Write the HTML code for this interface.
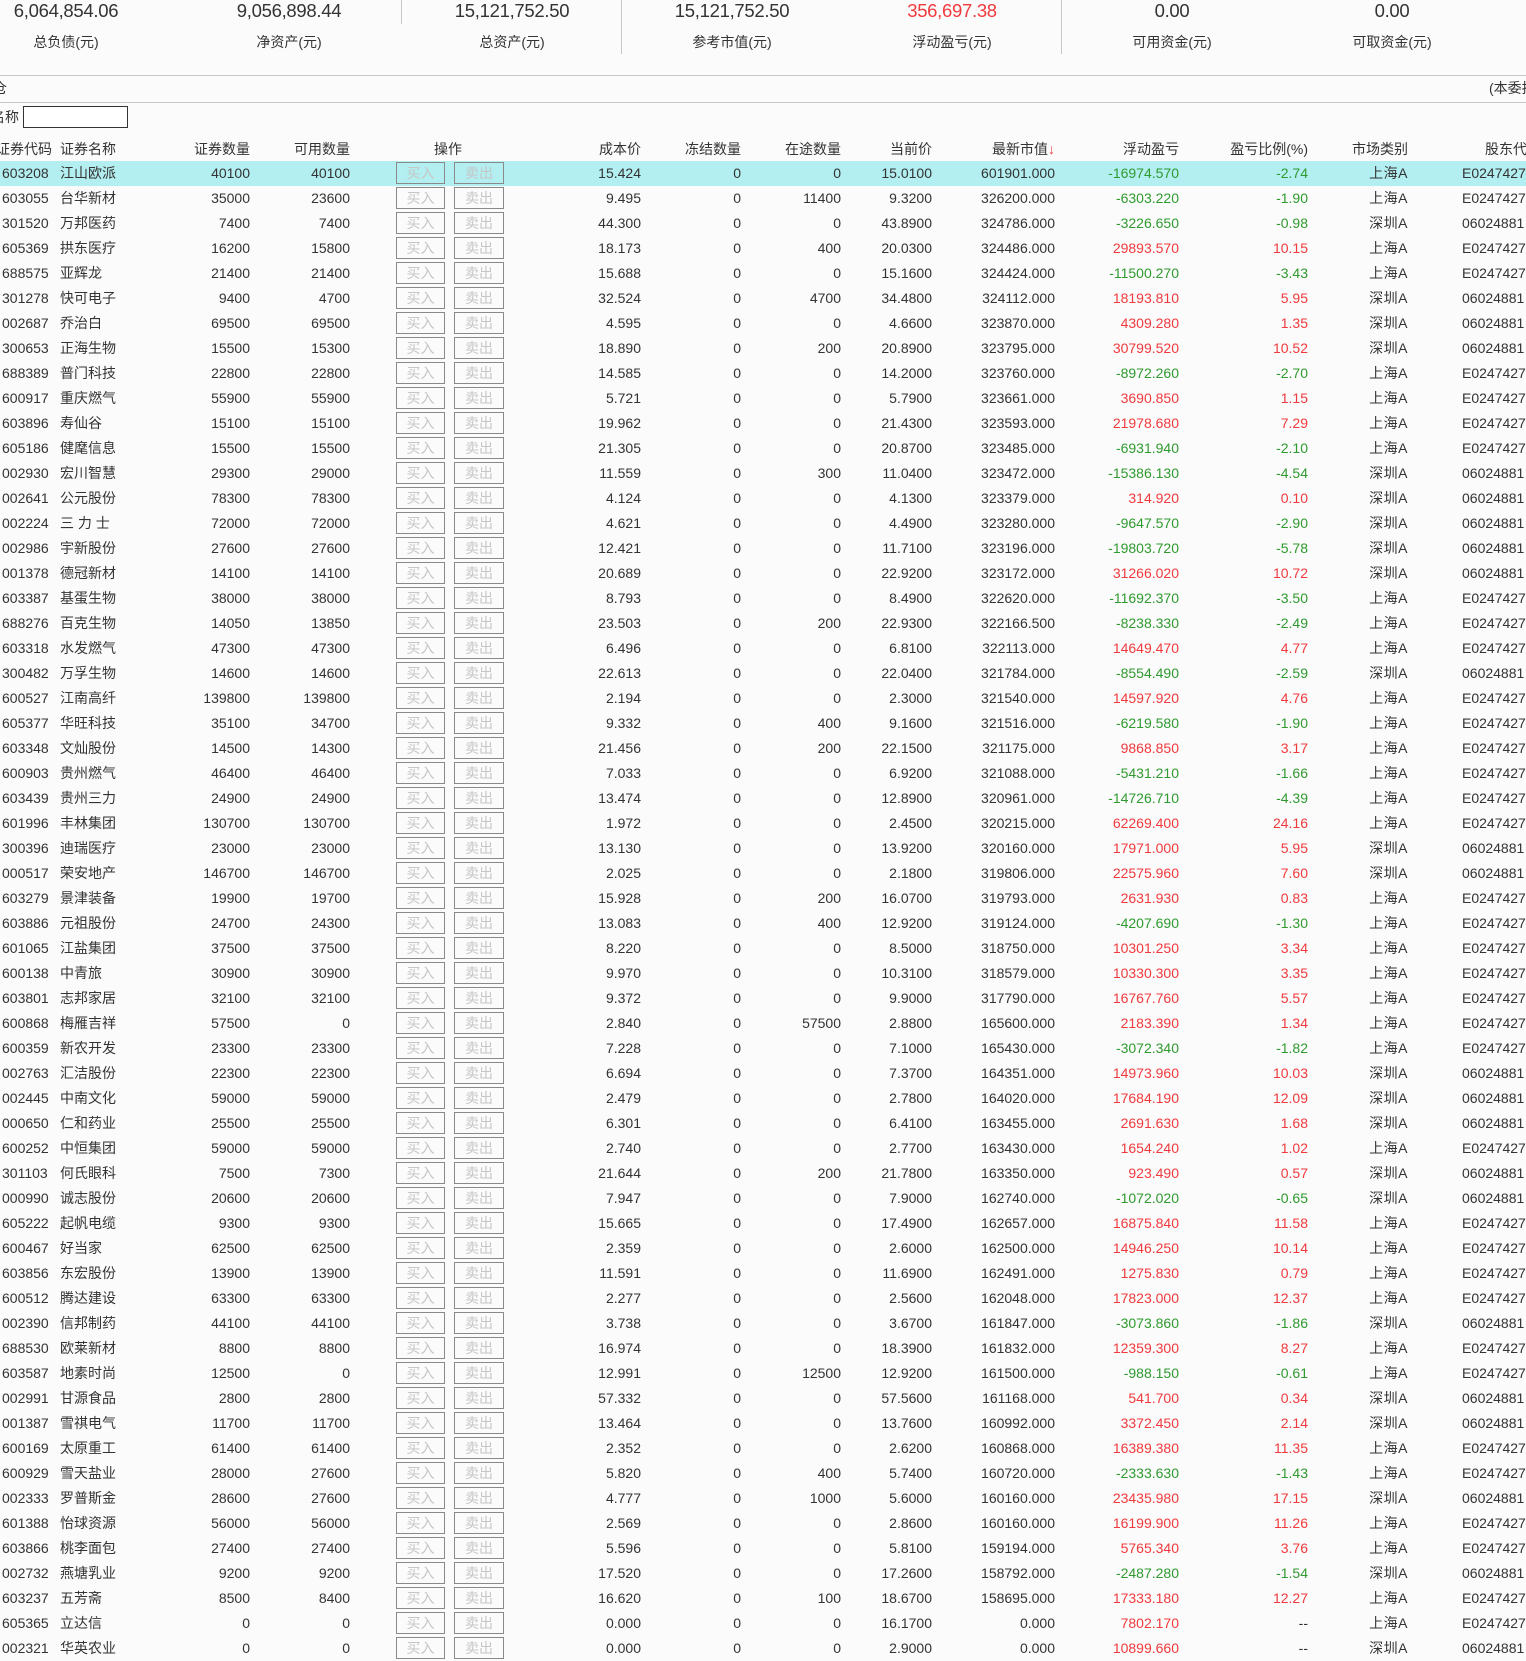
<!DOCTYPE html>
<html><head><meta charset="utf-8">
<style>
html,body{margin:0;padding:0;}
body{width:1526px;height:1658px;overflow:hidden;position:relative;background:#fbfbfb;font-family:"Liberation Sans","Noto Sans CJK SC",sans-serif;color:#333;font-size:14px;}
.sv{position:absolute;top:0;width:220px;text-align:center;font-size:18.5px;line-height:22px;letter-spacing:-0.3px;color:#333;}
.sl{position:absolute;top:33px;width:220px;text-align:center;font-size:14px;line-height:18px;color:#333;}
.red{color:#f03a3e;}
.vl{position:absolute;top:0;width:1px;background:#c8c8c8;}
.hl{position:absolute;left:0;width:1526px;height:1px;background:#c8c8c8;}
.hd{position:absolute;top:139px;left:0;width:1526px;height:20px;}
.rows{position:absolute;left:0;top:1px;width:1526px;height:1658px;}
.r{position:absolute;left:0;width:1526px;height:25px;}
.r i,.hd i{position:absolute;top:0;font-style:normal;line-height:25px;white-space:nowrap;}
.hd i{line-height:20px;}
.r i:nth-child(1){left:2px}
.r i:nth-child(2),.hd i:nth-child(2){left:60px}
.hd i:nth-child(1){left:-4px}
.r i:nth-child(n+3),.hd i:nth-child(n+3){text-align:right;width:100px}
.r i:nth-child(3),.hd i:nth-child(3){left:150px}
.r i:nth-child(4),.hd i:nth-child(4){left:250px}
.r i:nth-child(5),.r i:nth-child(6){box-sizing:border-box;top:1px;width:49px;height:22px;border:1px solid #8a8a8a;color:#c6c6c6;text-align:center;line-height:20px}
.r i:nth-child(5){left:396px}
.r i:nth-child(6){left:454px;width:50px}
.hd i:nth-child(5){left:398px;width:100px;text-align:center}
.r i:nth-child(7),.hd i:nth-child(6){left:541px}
.r i:nth-child(8),.hd i:nth-child(7){left:641px}
.r i:nth-child(9),.hd i:nth-child(8){left:741px}
.r i:nth-child(10),.hd i:nth-child(9){left:832px}
.r i:nth-child(11),.hd i:nth-child(10){left:955px}
.r i:nth-child(12),.hd i:nth-child(11){left:1079px}
.r i:nth-child(13),.hd i:nth-child(12){left:1208px}
.r i:nth-child(14),.hd i:nth-child(13){left:1308px}
.r i:nth-child(14){word-spacing:0;letter-spacing:0.5px}
.r i:nth-child(15){left:1462px;text-align:left;width:80px}
.hd i:nth-child(14){left:1485px;text-align:left;width:80px}
.u i:nth-child(12),.u i:nth-child(13),.x i:nth-child(12){color:#f03a3e}
.d i:nth-child(12),.d i:nth-child(13){color:#2f9a2f}
.sel{background:#b3eef0}
</style></head><body>
<div class="sv" style="left:-44px">6,064,854.06</div><div class="sl" style="left:-44px">总负债(元)</div>
<div class="sv" style="left:179px">9,056,898.44</div><div class="sl" style="left:179px">净资产(元)</div>
<div class="sv" style="left:402px">15,121,752.50</div><div class="sl" style="left:402px">总资产(元)</div>
<div class="sv" style="left:622px">15,121,752.50</div><div class="sl" style="left:622px">参考市值(元)</div>
<div class="sv red" style="left:842px">356,697.38</div><div class="sl" style="left:842px">浮动盈亏(元)</div>
<div class="sv" style="left:1062px">0.00</div><div class="sl" style="left:1062px">可用资金(元)</div>
<div class="sv" style="left:1282px">0.00</div><div class="sl" style="left:1282px">可取资金(元)</div>
<div class="vl" style="left:401px;height:24px"></div>
<div class="vl" style="left:621px;height:54px"></div>
<div class="vl" style="left:1061px;height:54px"></div>
<div class="hl" style="top:75px"></div>
<div class="hl" style="top:102px"></div>
<div style="position:absolute;left:-7px;top:79px;line-height:18px">仓</div>
<div style="position:absolute;left:1489px;top:79px;line-height:18px;white-space:nowrap">(本委托</div>
<div style="position:absolute;left:-9px;top:108px;line-height:18px">名称</div>
<div style="position:absolute;left:23px;top:106px;width:103px;height:20px;border:1px solid #333;background:#fff"></div>
<div class="hd"><i>证券代码</i><i>证券名称</i><i>证券数量</i><i>可用数量</i><i>操作</i><i>成本价</i><i>冻结数量</i><i>在途数量</i><i>当前价</i><i>最新市值<span style="color:#f03a3e">↓</span></i><i>浮动盈亏</i><i>盈亏比例(%)</i><i>市场类别</i><i>股东代码</i></div>
<div class="rows">
<div class="r d sel" style="top:160px"><i>603208</i><i>江山欧派</i><i>40100</i><i>40100</i><i>买入</i><i>卖出</i><i>15.424</i><i>0</i><i>0</i><i>15.0100</i><i>601901.000</i><i>-16974.570</i><i>-2.74</i><i>上海A</i><i>E0247427</i></div>
<div class="r d" style="top:185px"><i>603055</i><i>台华新材</i><i>35000</i><i>23600</i><i>买入</i><i>卖出</i><i>9.495</i><i>0</i><i>11400</i><i>9.3200</i><i>326200.000</i><i>-6303.220</i><i>-1.90</i><i>上海A</i><i>E0247427</i></div>
<div class="r d" style="top:210px"><i>301520</i><i>万邦医药</i><i>7400</i><i>7400</i><i>买入</i><i>卖出</i><i>44.300</i><i>0</i><i>0</i><i>43.8900</i><i>324786.000</i><i>-3226.650</i><i>-0.98</i><i>深圳A</i><i>06024881</i></div>
<div class="r u" style="top:235px"><i>605369</i><i>拱东医疗</i><i>16200</i><i>15800</i><i>买入</i><i>卖出</i><i>18.173</i><i>0</i><i>400</i><i>20.0300</i><i>324486.000</i><i>29893.570</i><i>10.15</i><i>上海A</i><i>E0247427</i></div>
<div class="r d" style="top:260px"><i>688575</i><i>亚辉龙</i><i>21400</i><i>21400</i><i>买入</i><i>卖出</i><i>15.688</i><i>0</i><i>0</i><i>15.1600</i><i>324424.000</i><i>-11500.270</i><i>-3.43</i><i>上海A</i><i>E0247427</i></div>
<div class="r u" style="top:285px"><i>301278</i><i>快可电子</i><i>9400</i><i>4700</i><i>买入</i><i>卖出</i><i>32.524</i><i>0</i><i>4700</i><i>34.4800</i><i>324112.000</i><i>18193.810</i><i>5.95</i><i>深圳A</i><i>06024881</i></div>
<div class="r u" style="top:310px"><i>002687</i><i>乔治白</i><i>69500</i><i>69500</i><i>买入</i><i>卖出</i><i>4.595</i><i>0</i><i>0</i><i>4.6600</i><i>323870.000</i><i>4309.280</i><i>1.35</i><i>深圳A</i><i>06024881</i></div>
<div class="r u" style="top:335px"><i>300653</i><i>正海生物</i><i>15500</i><i>15300</i><i>买入</i><i>卖出</i><i>18.890</i><i>0</i><i>200</i><i>20.8900</i><i>323795.000</i><i>30799.520</i><i>10.52</i><i>深圳A</i><i>06024881</i></div>
<div class="r d" style="top:360px"><i>688389</i><i>普门科技</i><i>22800</i><i>22800</i><i>买入</i><i>卖出</i><i>14.585</i><i>0</i><i>0</i><i>14.2000</i><i>323760.000</i><i>-8972.260</i><i>-2.70</i><i>上海A</i><i>E0247427</i></div>
<div class="r u" style="top:385px"><i>600917</i><i>重庆燃气</i><i>55900</i><i>55900</i><i>买入</i><i>卖出</i><i>5.721</i><i>0</i><i>0</i><i>5.7900</i><i>323661.000</i><i>3690.850</i><i>1.15</i><i>上海A</i><i>E0247427</i></div>
<div class="r u" style="top:410px"><i>603896</i><i>寿仙谷</i><i>15100</i><i>15100</i><i>买入</i><i>卖出</i><i>19.962</i><i>0</i><i>0</i><i>21.4300</i><i>323593.000</i><i>21978.680</i><i>7.29</i><i>上海A</i><i>E0247427</i></div>
<div class="r d" style="top:435px"><i>605186</i><i>健麾信息</i><i>15500</i><i>15500</i><i>买入</i><i>卖出</i><i>21.305</i><i>0</i><i>0</i><i>20.8700</i><i>323485.000</i><i>-6931.940</i><i>-2.10</i><i>上海A</i><i>E0247427</i></div>
<div class="r d" style="top:460px"><i>002930</i><i>宏川智慧</i><i>29300</i><i>29000</i><i>买入</i><i>卖出</i><i>11.559</i><i>0</i><i>300</i><i>11.0400</i><i>323472.000</i><i>-15386.130</i><i>-4.54</i><i>深圳A</i><i>06024881</i></div>
<div class="r u" style="top:485px"><i>002641</i><i>公元股份</i><i>78300</i><i>78300</i><i>买入</i><i>卖出</i><i>4.124</i><i>0</i><i>0</i><i>4.1300</i><i>323379.000</i><i>314.920</i><i>0.10</i><i>深圳A</i><i>06024881</i></div>
<div class="r d" style="top:510px"><i>002224</i><i>三 力 士</i><i>72000</i><i>72000</i><i>买入</i><i>卖出</i><i>4.621</i><i>0</i><i>0</i><i>4.4900</i><i>323280.000</i><i>-9647.570</i><i>-2.90</i><i>深圳A</i><i>06024881</i></div>
<div class="r d" style="top:535px"><i>002986</i><i>宇新股份</i><i>27600</i><i>27600</i><i>买入</i><i>卖出</i><i>12.421</i><i>0</i><i>0</i><i>11.7100</i><i>323196.000</i><i>-19803.720</i><i>-5.78</i><i>深圳A</i><i>06024881</i></div>
<div class="r u" style="top:560px"><i>001378</i><i>德冠新材</i><i>14100</i><i>14100</i><i>买入</i><i>卖出</i><i>20.689</i><i>0</i><i>0</i><i>22.9200</i><i>323172.000</i><i>31266.020</i><i>10.72</i><i>深圳A</i><i>06024881</i></div>
<div class="r d" style="top:585px"><i>603387</i><i>基蛋生物</i><i>38000</i><i>38000</i><i>买入</i><i>卖出</i><i>8.793</i><i>0</i><i>0</i><i>8.4900</i><i>322620.000</i><i>-11692.370</i><i>-3.50</i><i>上海A</i><i>E0247427</i></div>
<div class="r d" style="top:610px"><i>688276</i><i>百克生物</i><i>14050</i><i>13850</i><i>买入</i><i>卖出</i><i>23.503</i><i>0</i><i>200</i><i>22.9300</i><i>322166.500</i><i>-8238.330</i><i>-2.49</i><i>上海A</i><i>E0247427</i></div>
<div class="r u" style="top:635px"><i>603318</i><i>水发燃气</i><i>47300</i><i>47300</i><i>买入</i><i>卖出</i><i>6.496</i><i>0</i><i>0</i><i>6.8100</i><i>322113.000</i><i>14649.470</i><i>4.77</i><i>上海A</i><i>E0247427</i></div>
<div class="r d" style="top:660px"><i>300482</i><i>万孚生物</i><i>14600</i><i>14600</i><i>买入</i><i>卖出</i><i>22.613</i><i>0</i><i>0</i><i>22.0400</i><i>321784.000</i><i>-8554.490</i><i>-2.59</i><i>深圳A</i><i>06024881</i></div>
<div class="r u" style="top:685px"><i>600527</i><i>江南高纤</i><i>139800</i><i>139800</i><i>买入</i><i>卖出</i><i>2.194</i><i>0</i><i>0</i><i>2.3000</i><i>321540.000</i><i>14597.920</i><i>4.76</i><i>上海A</i><i>E0247427</i></div>
<div class="r d" style="top:710px"><i>605377</i><i>华旺科技</i><i>35100</i><i>34700</i><i>买入</i><i>卖出</i><i>9.332</i><i>0</i><i>400</i><i>9.1600</i><i>321516.000</i><i>-6219.580</i><i>-1.90</i><i>上海A</i><i>E0247427</i></div>
<div class="r u" style="top:735px"><i>603348</i><i>文灿股份</i><i>14500</i><i>14300</i><i>买入</i><i>卖出</i><i>21.456</i><i>0</i><i>200</i><i>22.1500</i><i>321175.000</i><i>9868.850</i><i>3.17</i><i>上海A</i><i>E0247427</i></div>
<div class="r d" style="top:760px"><i>600903</i><i>贵州燃气</i><i>46400</i><i>46400</i><i>买入</i><i>卖出</i><i>7.033</i><i>0</i><i>0</i><i>6.9200</i><i>321088.000</i><i>-5431.210</i><i>-1.66</i><i>上海A</i><i>E0247427</i></div>
<div class="r d" style="top:785px"><i>603439</i><i>贵州三力</i><i>24900</i><i>24900</i><i>买入</i><i>卖出</i><i>13.474</i><i>0</i><i>0</i><i>12.8900</i><i>320961.000</i><i>-14726.710</i><i>-4.39</i><i>上海A</i><i>E0247427</i></div>
<div class="r u" style="top:810px"><i>601996</i><i>丰林集团</i><i>130700</i><i>130700</i><i>买入</i><i>卖出</i><i>1.972</i><i>0</i><i>0</i><i>2.4500</i><i>320215.000</i><i>62269.400</i><i>24.16</i><i>上海A</i><i>E0247427</i></div>
<div class="r u" style="top:835px"><i>300396</i><i>迪瑞医疗</i><i>23000</i><i>23000</i><i>买入</i><i>卖出</i><i>13.130</i><i>0</i><i>0</i><i>13.9200</i><i>320160.000</i><i>17971.000</i><i>5.95</i><i>深圳A</i><i>06024881</i></div>
<div class="r u" style="top:860px"><i>000517</i><i>荣安地产</i><i>146700</i><i>146700</i><i>买入</i><i>卖出</i><i>2.025</i><i>0</i><i>0</i><i>2.1800</i><i>319806.000</i><i>22575.960</i><i>7.60</i><i>深圳A</i><i>06024881</i></div>
<div class="r u" style="top:885px"><i>603279</i><i>景津装备</i><i>19900</i><i>19700</i><i>买入</i><i>卖出</i><i>15.928</i><i>0</i><i>200</i><i>16.0700</i><i>319793.000</i><i>2631.930</i><i>0.83</i><i>上海A</i><i>E0247427</i></div>
<div class="r d" style="top:910px"><i>603886</i><i>元祖股份</i><i>24700</i><i>24300</i><i>买入</i><i>卖出</i><i>13.083</i><i>0</i><i>400</i><i>12.9200</i><i>319124.000</i><i>-4207.690</i><i>-1.30</i><i>上海A</i><i>E0247427</i></div>
<div class="r u" style="top:935px"><i>601065</i><i>江盐集团</i><i>37500</i><i>37500</i><i>买入</i><i>卖出</i><i>8.220</i><i>0</i><i>0</i><i>8.5000</i><i>318750.000</i><i>10301.250</i><i>3.34</i><i>上海A</i><i>E0247427</i></div>
<div class="r u" style="top:960px"><i>600138</i><i>中青旅</i><i>30900</i><i>30900</i><i>买入</i><i>卖出</i><i>9.970</i><i>0</i><i>0</i><i>10.3100</i><i>318579.000</i><i>10330.300</i><i>3.35</i><i>上海A</i><i>E0247427</i></div>
<div class="r u" style="top:985px"><i>603801</i><i>志邦家居</i><i>32100</i><i>32100</i><i>买入</i><i>卖出</i><i>9.372</i><i>0</i><i>0</i><i>9.9000</i><i>317790.000</i><i>16767.760</i><i>5.57</i><i>上海A</i><i>E0247427</i></div>
<div class="r u" style="top:1010px"><i>600868</i><i>梅雁吉祥</i><i>57500</i><i>0</i><i>买入</i><i>卖出</i><i>2.840</i><i>0</i><i>57500</i><i>2.8800</i><i>165600.000</i><i>2183.390</i><i>1.34</i><i>上海A</i><i>E0247427</i></div>
<div class="r d" style="top:1035px"><i>600359</i><i>新农开发</i><i>23300</i><i>23300</i><i>买入</i><i>卖出</i><i>7.228</i><i>0</i><i>0</i><i>7.1000</i><i>165430.000</i><i>-3072.340</i><i>-1.82</i><i>上海A</i><i>E0247427</i></div>
<div class="r u" style="top:1060px"><i>002763</i><i>汇洁股份</i><i>22300</i><i>22300</i><i>买入</i><i>卖出</i><i>6.694</i><i>0</i><i>0</i><i>7.3700</i><i>164351.000</i><i>14973.960</i><i>10.03</i><i>深圳A</i><i>06024881</i></div>
<div class="r u" style="top:1085px"><i>002445</i><i>中南文化</i><i>59000</i><i>59000</i><i>买入</i><i>卖出</i><i>2.479</i><i>0</i><i>0</i><i>2.7800</i><i>164020.000</i><i>17684.190</i><i>12.09</i><i>深圳A</i><i>06024881</i></div>
<div class="r u" style="top:1110px"><i>000650</i><i>仁和药业</i><i>25500</i><i>25500</i><i>买入</i><i>卖出</i><i>6.301</i><i>0</i><i>0</i><i>6.4100</i><i>163455.000</i><i>2691.630</i><i>1.68</i><i>深圳A</i><i>06024881</i></div>
<div class="r u" style="top:1135px"><i>600252</i><i>中恒集团</i><i>59000</i><i>59000</i><i>买入</i><i>卖出</i><i>2.740</i><i>0</i><i>0</i><i>2.7700</i><i>163430.000</i><i>1654.240</i><i>1.02</i><i>上海A</i><i>E0247427</i></div>
<div class="r u" style="top:1160px"><i>301103</i><i>何氏眼科</i><i>7500</i><i>7300</i><i>买入</i><i>卖出</i><i>21.644</i><i>0</i><i>200</i><i>21.7800</i><i>163350.000</i><i>923.490</i><i>0.57</i><i>深圳A</i><i>06024881</i></div>
<div class="r d" style="top:1185px"><i>000990</i><i>诚志股份</i><i>20600</i><i>20600</i><i>买入</i><i>卖出</i><i>7.947</i><i>0</i><i>0</i><i>7.9000</i><i>162740.000</i><i>-1072.020</i><i>-0.65</i><i>深圳A</i><i>06024881</i></div>
<div class="r u" style="top:1210px"><i>605222</i><i>起帆电缆</i><i>9300</i><i>9300</i><i>买入</i><i>卖出</i><i>15.665</i><i>0</i><i>0</i><i>17.4900</i><i>162657.000</i><i>16875.840</i><i>11.58</i><i>上海A</i><i>E0247427</i></div>
<div class="r u" style="top:1235px"><i>600467</i><i>好当家</i><i>62500</i><i>62500</i><i>买入</i><i>卖出</i><i>2.359</i><i>0</i><i>0</i><i>2.6000</i><i>162500.000</i><i>14946.250</i><i>10.14</i><i>上海A</i><i>E0247427</i></div>
<div class="r u" style="top:1260px"><i>603856</i><i>东宏股份</i><i>13900</i><i>13900</i><i>买入</i><i>卖出</i><i>11.591</i><i>0</i><i>0</i><i>11.6900</i><i>162491.000</i><i>1275.830</i><i>0.79</i><i>上海A</i><i>E0247427</i></div>
<div class="r u" style="top:1285px"><i>600512</i><i>腾达建设</i><i>63300</i><i>63300</i><i>买入</i><i>卖出</i><i>2.277</i><i>0</i><i>0</i><i>2.5600</i><i>162048.000</i><i>17823.000</i><i>12.37</i><i>上海A</i><i>E0247427</i></div>
<div class="r d" style="top:1310px"><i>002390</i><i>信邦制药</i><i>44100</i><i>44100</i><i>买入</i><i>卖出</i><i>3.738</i><i>0</i><i>0</i><i>3.6700</i><i>161847.000</i><i>-3073.860</i><i>-1.86</i><i>深圳A</i><i>06024881</i></div>
<div class="r u" style="top:1335px"><i>688530</i><i>欧莱新材</i><i>8800</i><i>8800</i><i>买入</i><i>卖出</i><i>16.974</i><i>0</i><i>0</i><i>18.3900</i><i>161832.000</i><i>12359.300</i><i>8.27</i><i>上海A</i><i>E0247427</i></div>
<div class="r d" style="top:1360px"><i>603587</i><i>地素时尚</i><i>12500</i><i>0</i><i>买入</i><i>卖出</i><i>12.991</i><i>0</i><i>12500</i><i>12.9200</i><i>161500.000</i><i>-988.150</i><i>-0.61</i><i>上海A</i><i>E0247427</i></div>
<div class="r u" style="top:1385px"><i>002991</i><i>甘源食品</i><i>2800</i><i>2800</i><i>买入</i><i>卖出</i><i>57.332</i><i>0</i><i>0</i><i>57.5600</i><i>161168.000</i><i>541.700</i><i>0.34</i><i>深圳A</i><i>06024881</i></div>
<div class="r u" style="top:1410px"><i>001387</i><i>雪祺电气</i><i>11700</i><i>11700</i><i>买入</i><i>卖出</i><i>13.464</i><i>0</i><i>0</i><i>13.7600</i><i>160992.000</i><i>3372.450</i><i>2.14</i><i>深圳A</i><i>06024881</i></div>
<div class="r u" style="top:1435px"><i>600169</i><i>太原重工</i><i>61400</i><i>61400</i><i>买入</i><i>卖出</i><i>2.352</i><i>0</i><i>0</i><i>2.6200</i><i>160868.000</i><i>16389.380</i><i>11.35</i><i>上海A</i><i>E0247427</i></div>
<div class="r d" style="top:1460px"><i>600929</i><i>雪天盐业</i><i>28000</i><i>27600</i><i>买入</i><i>卖出</i><i>5.820</i><i>0</i><i>400</i><i>5.7400</i><i>160720.000</i><i>-2333.630</i><i>-1.43</i><i>上海A</i><i>E0247427</i></div>
<div class="r u" style="top:1485px"><i>002333</i><i>罗普斯金</i><i>28600</i><i>27600</i><i>买入</i><i>卖出</i><i>4.777</i><i>0</i><i>1000</i><i>5.6000</i><i>160160.000</i><i>23435.980</i><i>17.15</i><i>深圳A</i><i>06024881</i></div>
<div class="r u" style="top:1510px"><i>601388</i><i>怡球资源</i><i>56000</i><i>56000</i><i>买入</i><i>卖出</i><i>2.569</i><i>0</i><i>0</i><i>2.8600</i><i>160160.000</i><i>16199.900</i><i>11.26</i><i>上海A</i><i>E0247427</i></div>
<div class="r u" style="top:1535px"><i>603866</i><i>桃李面包</i><i>27400</i><i>27400</i><i>买入</i><i>卖出</i><i>5.596</i><i>0</i><i>0</i><i>5.8100</i><i>159194.000</i><i>5765.340</i><i>3.76</i><i>上海A</i><i>E0247427</i></div>
<div class="r d" style="top:1560px"><i>002732</i><i>燕塘乳业</i><i>9200</i><i>9200</i><i>买入</i><i>卖出</i><i>17.520</i><i>0</i><i>0</i><i>17.2600</i><i>158792.000</i><i>-2487.280</i><i>-1.54</i><i>深圳A</i><i>06024881</i></div>
<div class="r u" style="top:1585px"><i>603237</i><i>五芳斋</i><i>8500</i><i>8400</i><i>买入</i><i>卖出</i><i>16.620</i><i>0</i><i>100</i><i>18.6700</i><i>158695.000</i><i>17333.180</i><i>12.27</i><i>上海A</i><i>E0247427</i></div>
<div class="r x" style="top:1610px"><i>605365</i><i>立达信</i><i>0</i><i>0</i><i>买入</i><i>卖出</i><i>0.000</i><i>0</i><i>0</i><i>16.1700</i><i>0.000</i><i>7802.170</i><i>--</i><i>上海A</i><i>E0247427</i></div>
<div class="r x" style="top:1635px"><i>002321</i><i>华英农业</i><i>0</i><i>0</i><i>买入</i><i>卖出</i><i>0.000</i><i>0</i><i>0</i><i>2.9000</i><i>0.000</i><i>10899.660</i><i>--</i><i>深圳A</i><i>06024881</i></div>
</div>
</body></html>
